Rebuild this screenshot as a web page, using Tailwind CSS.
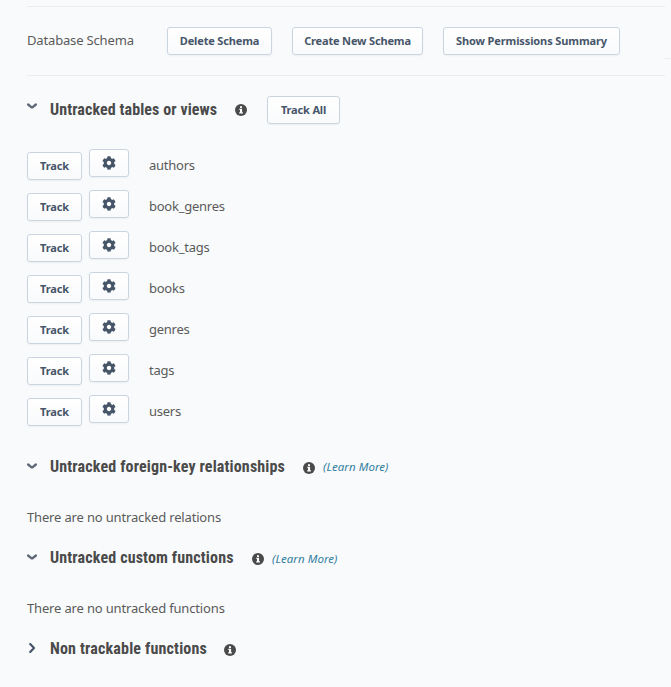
<!DOCTYPE html>
<html lang="en"><head><meta charset="utf-8"><title>Database Schema</title>
<script src="https://cdn.jsdelivr.net/npm/@tailwindcss/browser@4"></script></head>
<body class="h-[687px] overflow-hidden bg-[#f9fafc] font-['Noto_Sans',sans-serif] text-[13px] tracking-[-0.16px] text-[#5a5a5a]">
<svg class="hidden">
<symbol id="down" viewBox="0 0 12 12"><path d="M2.1 4.5 L5.3 7.2 Q6 7.7 6.7 7.2 L9.9 4.5" fill="none" stroke="#5d6777" stroke-width="2.3" stroke-linecap="round" stroke-linejoin="round"/></symbol>
<symbol id="right" viewBox="0 0 12 12"><path d="M4.2 2.1 8 6 4.2 9.9" fill="none" stroke="#475569" stroke-width="2.2" stroke-linecap="round" stroke-linejoin="round"/></symbol>
<symbol id="info" viewBox="0 0 12 12"><circle cx="6" cy="6" r="6" fill="#4a4a4a"/><path d="M5 2.2h2v1.7H5zM4.3 4.8h2.8v3.5h.8v1.2H4.2V8.3H5V6h-.7z" fill="#fff"/></symbol>
<symbol id="gear" viewBox="0 0 512 512"><path fill="#475569" d="M487.4 315.7l-42.6-24.6c4.3-23.2 4.3-47 0-70.2l42.6-24.6c4.9-2.8 7.1-8.6 5.5-14-11.1-35.6-30-67.8-54.7-94.6-3.8-4.1-10-5.1-14.8-2.3L380.8 110c-17.9-15.4-38.5-27.3-60.8-35.1V25.8c0-5.6-3.9-10.5-9.4-11.7-36.7-8.2-74.3-7.8-109.2 0-5.5 1.2-9.4 6.1-9.4 11.7V75c-22.2 7.9-42.8 19.8-60.8 35.1L88.7 85.5c-4.9-2.8-11-1.9-14.8 2.3-24.7 26.7-43.6 58.9-54.7 94.6-1.7 5.4.6 11.2 5.5 14L67.3 221c-4.3 23.2-4.3 47 0 70.2l-42.6 24.6c-4.9 2.8-7.1 8.6-5.5 14 11.1 35.6 30 67.8 54.7 94.6 3.8 4.1 10 5.1 14.8 2.3l42.6-24.6c17.9 15.4 38.5 27.3 60.8 35.1v49.2c0 5.6 3.9 10.5 9.4 11.7 36.7 8.2 74.3 7.8 109.2 0 5.5-1.2 9.4-6.1 9.4-11.7v-49.2c22.2-7.9 42.8-19.8 60.8-35.1l42.6 24.6c4.9 2.8 11 1.9 14.8-2.3 24.7-26.7 43.6-58.9 54.7-94.6 1.5-5.5-.7-11.3-5.6-14.1zM256 336c-44.1 0-80-35.9-80-80s35.9-80 80-80 80 35.9 80 80-35.9 80-80 80z"/></symbol>
</svg>
<div class="flex items-start">
<main class="ml-[27px] w-[638px] shrink-0 pt-1.5">
<section class="flex h-[70px] items-center border-y border-[#ededef] leading-5">
<span class="-mt-0.5 w-[140px]">Database Schema</span>
<div class="flex gap-5">
<button class="h-7 w-[105px] rounded-[3px] border border-[#cbd5e1] bg-linear-to-b from-white to-[#f9fafc] text-[11px] font-bold text-[#475569] shadow-xs">Delete Schema</button>
<button class="h-7 w-[131px] rounded-[3px] border border-[#cbd5e1] bg-linear-to-b from-white to-[#f9fafc] text-[11px] font-bold text-[#475569] shadow-xs">Create New Schema</button>
<button class="h-7 w-[177px] rounded-[3px] border border-[#cbd5e1] bg-linear-to-b from-white to-[#f9fafc] text-[11px] font-bold tracking-[-0.11px] text-[#475569] shadow-xs">Show Permissions Summary</button>
</div>
</section>
<section>
<div class="mt-5 flex h-7 items-center">
<svg class="-ml-px -mt-2 mr-[12px] size-3"><use href="#down"/></svg>
<h2 class="-mt-px w-[185px] font-['Roboto',sans-serif] text-base font-bold leading-5 tracking-[0.09px] text-[#4a4a4a] [font-stretch:85%]">Untracked tables or views</h2>
<svg class="size-3"><use href="#info"/></svg>
<button class="ml-5 h-7 w-[73px] rounded-[3px] border border-[#cbd5e1] bg-linear-to-b from-white to-[#f9fafc] text-[11px] font-bold text-[#475569] shadow-xs">Track All</button>
</div>
<div id="tables" class="mt-[25px] flex flex-col gap-[10px]"></div>
</section>
<section>
<div class="mt-[26px] flex h-7 items-center">
<svg class="-ml-px -mt-px mr-[12px] size-3"><use href="#down"/></svg>
<h2 class="mt-px w-[253px] font-['Roboto',sans-serif] text-base font-bold leading-5 tracking-[0.15px] text-[#4a4a4a] [font-stretch:85%]">Untracked foreign-key relationships</h2>
<svg class="mt-1 size-3"><use href="#info"/></svg>
<a class="ml-2 mt-px text-[11.5px] italic leading-5 tracking-[0.05px] text-[#337f9e]">(Learn More)</a>
</div>
<p class="mt-[27px] leading-5">There are no untracked relations</p>
</section>
<section>
<div class="mt-4 flex h-7 items-center">
<svg class="-ml-px mr-[12px] size-3"><use href="#down"/></svg>
<h2 class="mt-0.5 w-[202px] font-['Roboto',sans-serif] text-base font-bold leading-5 tracking-[0.15px] text-[#4a4a4a] [font-stretch:85%]">Untracked custom functions</h2>
<svg class="mt-1 size-3"><use href="#info"/></svg>
<a class="ml-2 mt-[3px] text-[11.5px] italic leading-5 tracking-[0.05px] text-[#337f9e]">(Learn More)</a>
</div>
<p class="mt-[27px] leading-5">There are no untracked functions</p>
</section>
<section class="mt-4 flex h-7 items-center">
<svg class="-ml-px mr-[12px] size-3"><use href="#right"/></svg>
<h2 class="mt-0.5 w-[174px] font-['Roboto',sans-serif] text-base font-bold leading-5 tracking-[0.17px] text-[#4a4a4a] [font-stretch:85%]">Non trackable functions</h2>
<svg class="mt-1 size-3"><use href="#info"/></svg>
</section>
</main>
<div class="mt-[58px] h-px w-[6px] bg-[#ededef]"></div>
</div>
<script>
document.getElementById('tables').innerHTML=['authors','book_genres','book_tags','books','genres','tags','users'].map(n=>`<div class="flex h-[31px] items-start">
<button class="mt-[3px] h-7 w-[55px] rounded-[3px] border border-[#cbd5e1] bg-linear-to-b from-white to-[#f9fafc] text-[11px] font-bold tracking-[-0.1px] text-[#475569] shadow-xs">Track</button>
<button class="ml-[7px] flex h-7 w-10 items-center justify-center rounded-[3px] border border-[#cbd5e1] bg-linear-to-b from-white to-[#f9fafc] shadow-xs"><svg class="size-[14px]"><use href="#gear"/></svg></button>
<span class="ml-5 mt-[6px] leading-5 tracking-[-0.25px]">${n}</span></div>`).join('');
</script>
</body></html>
